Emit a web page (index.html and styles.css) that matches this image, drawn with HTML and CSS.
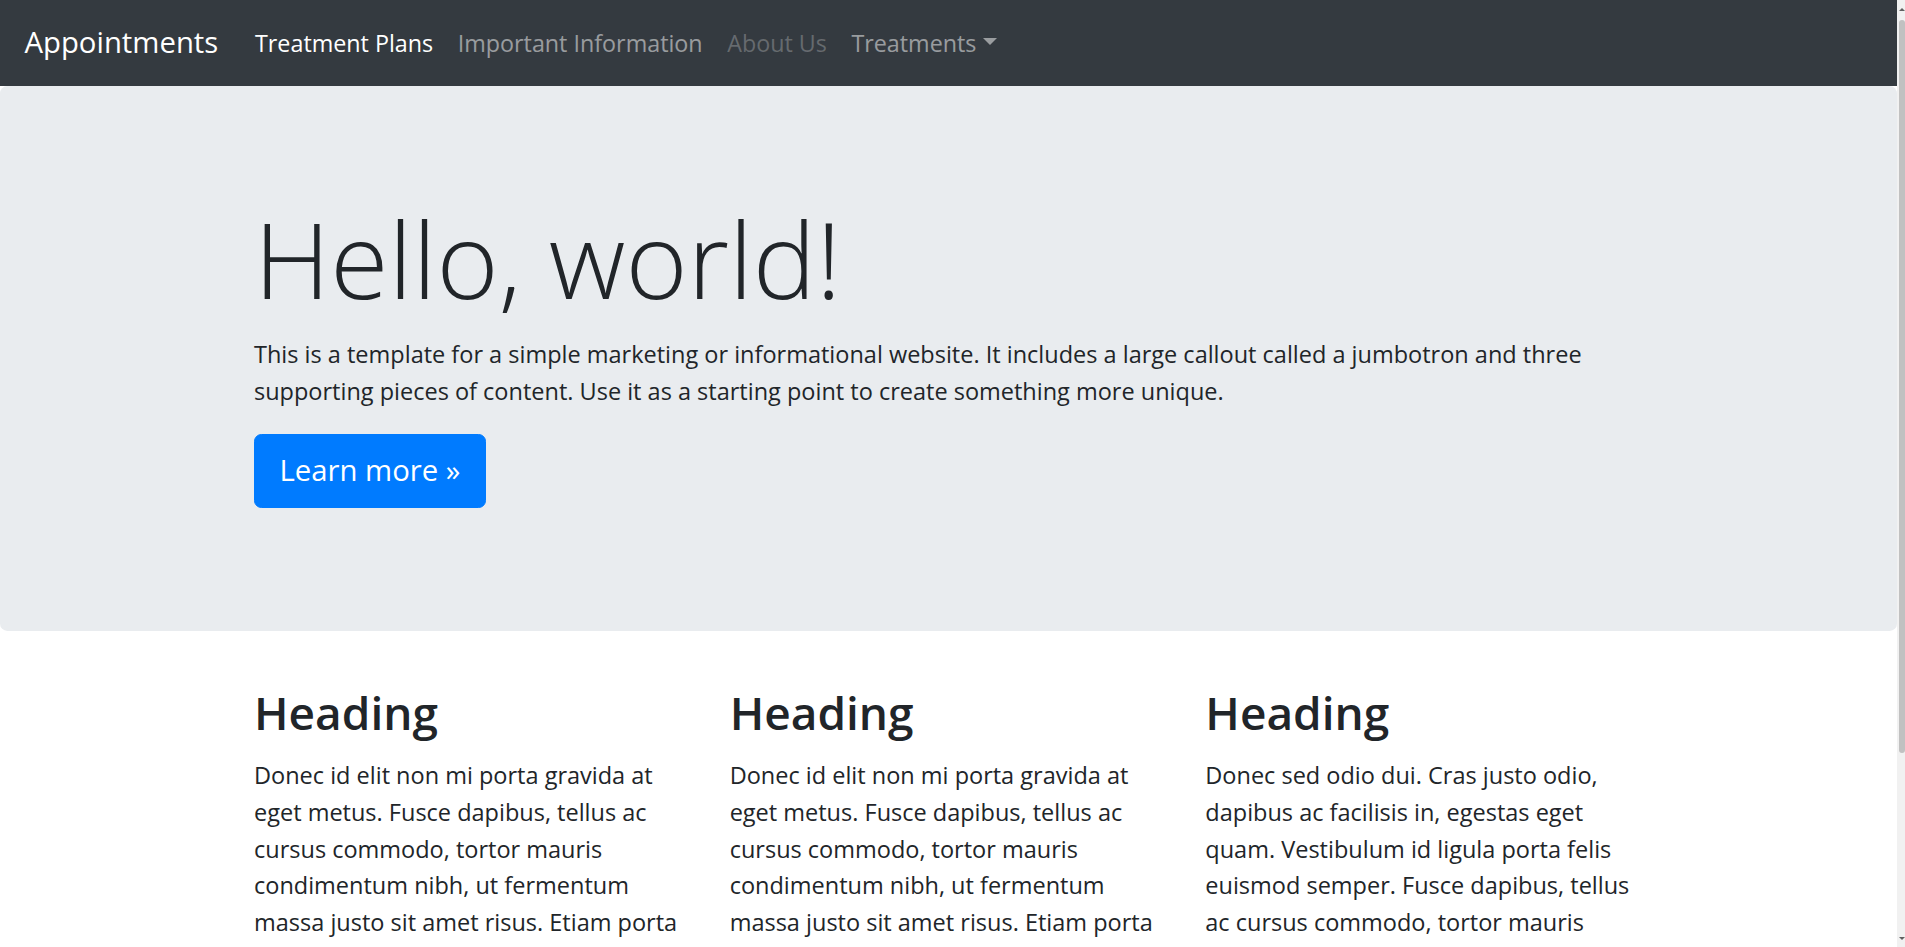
FILE: index.html
```html
<!DOCTYPE html>
<html lang="en">
<head>
<meta charset="utf-8">
<title>Appointments</title>
<link rel="stylesheet" href="styles.css">
</head>
<body>
<div class="page">
  <nav class="navbar">
    <a class="brand" href="#">Appointments</a>
    <ul class="nav">
      <li><a class="nav-link active" href="#">Treatment Plans</a></li>
      <li><a class="nav-link" href="#">Important Information</a></li>
      <li><a class="nav-link disabled" href="#">About Us</a></li>
      <li><a class="nav-link dropdown-toggle" href="#">Treatments</a></li>
    </ul>
  </nav>
  <main>
    <div class="jumbotron">
      <div class="container">
        <h1 class="display">Hello, world!</h1>
        <p>This is a template for a simple marketing or informational website. It includes a large callout called a jumbotron and three supporting pieces of content. Use it as a starting point to create something more unique.</p>
        <p><a class="btn btn-primary btn-lg" href="#">Learn more &raquo;</a></p>
      </div>
    </div>
    <div class="container">
      <div class="row">
        <div class="col">
          <h2>Heading</h2>
          <p>Donec id elit non mi porta gravida at eget metus. Fusce dapibus, tellus ac cursus commodo, tortor mauris condimentum nibh, ut fermentum massa justo sit amet risus. Etiam porta sem malesuada magna mollis euismod. Donec sed odio dui.</p>
          <p><a class="btn btn-secondary" href="#">View details &raquo;</a></p>
        </div>
        <div class="col">
          <h2>Heading</h2>
          <p>Donec id elit non mi porta gravida at eget metus. Fusce dapibus, tellus ac cursus commodo, tortor mauris condimentum nibh, ut fermentum massa justo sit amet risus. Etiam porta sem malesuada magna mollis euismod. Donec sed odio dui.</p>
          <p><a class="btn btn-secondary" href="#">View details &raquo;</a></p>
        </div>
        <div class="col">
          <h2>Heading</h2>
          <p>Donec sed odio dui. Cras justo odio, dapibus ac facilisis in, egestas eget quam. Vestibulum id ligula porta felis euismod semper. Fusce dapibus, tellus ac cursus commodo, tortor mauris condimentum nibh, ut fermentum massa justo sit amet risus.</p>
          <p><a class="btn btn-secondary" href="#">View details &raquo;</a></p>
        </div>
      </div>
      <hr>
    </div>
  </main>
  <footer class="container">
    <p>&copy; Company 2017-2018</p>
  </footer>
</div>
<div class="scrollbar" aria-hidden="true">
  <div class="sb-btn sb-up"></div>
  <div class="sb-track"><div class="sb-thumb"></div></div>
  <div class="sb-btn sb-down"></div>
</div>
</body>
</html>
```

FILE: styles.css
```css
* { box-sizing: border-box; }

html, body { margin: 0; padding: 0; }

body {
  display: flex;
  align-items: flex-start;
  font-family: "Open Sans", "Noto Sans", "Liberation Sans", sans-serif;
  font-size: 23.5px;
  line-height: 36.75px;
  color: #212529;
  background: #fff;
}

.page {
  flex: 1 1 auto;
  min-width: 0;
}

/* thin browser scrollbar */
.scrollbar {
  flex: 0 0 8px;
  height: 947px;
  background: #f1f1f1;
  display: flex;
  flex-direction: column;
}

.sb-btn {
  flex: 0 0 18px;
  display: flex;
  justify-content: center;
  align-items: center;
}

.sb-up::after {
  content: "";
  border-bottom: 3px solid #606060;
  border-left: 3px solid transparent;
  border-right: 3px solid transparent;
  margin-left: 2px;
}

.sb-down::after {
  content: "";
  border-top: 3px solid #606060;
  border-left: 3px solid transparent;
  border-right: 3px solid transparent;
  margin-left: 2px;
}

.sb-track {
  flex: 1 1 auto;
  padding: 2px 0 0 2px;
}

.sb-thumb {
  height: 733px;
  background: #c1c1c1;
  border-radius: 3px;
}

a { text-decoration: none; }

.navbar {
  display: flex;
  align-items: center;
  background: #343a40;
  padding: 12.25px 24.5px;
}

.brand {
  color: #fff;
  font-size: 29.3px;
  line-height: 45.9px;
  padding: 7.65px 0;
  margin-right: 24.5px;
  white-space: nowrap;
}

.nav {
  display: flex;
  list-style: none;
  margin: 0;
  padding: 0;
}

.nav-link {
  display: block;
  padding: 12.25px;
  font-size: 23.3px;
  line-height: 36.75px;
  color: rgba(255, 255, 255, 0.5);
}

.nav-link.active { color: #fff; }
.nav-link.disabled { color: rgba(255, 255, 255, 0.25); }

.dropdown-toggle::after {
  content: "";
  display: inline-block;
  margin-left: 6.25px;
  vertical-align: 6.25px;
  border-top: 7.35px solid;
  border-right: 7.35px solid transparent;
  border-left: 7.35px solid transparent;
  border-bottom: 0;
}

.jumbotron {
  background: #e9ecef;
  border-radius: 7.35px;
  padding: 106px 49px 99px;
  margin-bottom: 52px;
}

.container {
  max-width: 1427px;
  margin: 0 auto;
  padding: 0 25px 0 19px;
}

h1.display {
  font-size: 106px;
  font-weight: 300;
  line-height: 132px;
  margin: 0 0 12.25px;
}

p { margin: 0 0 24.5px; }

.btn {
  display: inline-block;
  border: 1.5px solid transparent;
  font-weight: 400;
  text-align: center;
}

.btn-primary {
  color: #fff;
  background: #007bff;
  border-color: #007bff;
}

.btn-lg {
  font-size: 29.3px;
  line-height: 45.9px;
  padding: 13px 24.5px;
  border-radius: 7.35px;
}

.btn-secondary {
  color: #fff;
  background: #6c757d;
  border-color: #6c757d;
  padding: 9.2px 18.4px;
  border-radius: 6.1px;
}

.row {
  display: flex;
  margin: 0 -22px;
}

.col {
  flex: 0 0 33.3333%;
  max-width: 33.3333%;
  padding: 0 22px;
}

h2 {
  font-size: 46px;
  font-weight: 600;
  line-height: 58.8px;
  margin: 0 0 15px;
}

hr {
  margin: 24.5px 0;
  border: 0;
  border-top: 1.5px solid rgba(0, 0, 0, 0.1);
}
```
